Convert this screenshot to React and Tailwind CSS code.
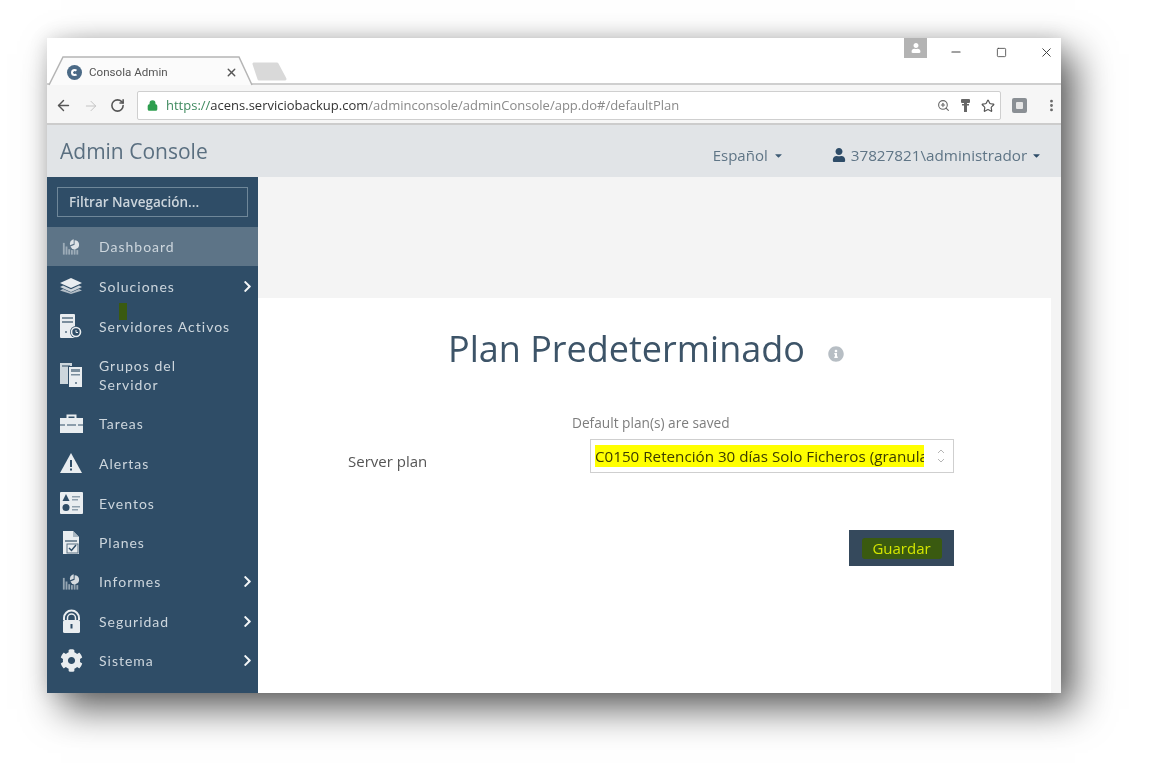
import React from "react";
import { ArrowLeft, ArrowRight, RotateCw, Lock, ZoomIn, Star, MoreVertical, Minus, Square, X } from "lucide-react";
import { FaCog, FaUser, FaInfoCircle, FaChevronRight, FaCaretDown } from "react-icons/fa";

const c = "#e9edf0";

const Chart = () => (
  <svg width="18" height="17" viewBox="0 0 20 18" className="opacity-80">
    <rect x="1" y="5" width="2" height="13" fill="#aebbc5" />
    <rect x="4" y="9" width="2" height="9" fill="#aebbc5" />
    <rect x="7" y="12" width="2" height="6" fill="#aebbc5" />
    <rect x="10" y="13" width="2" height="5" fill="#aebbc5" />
    <rect x="13" y="11" width="2" height="7" fill="#aebbc5" />
    <rect x="16" y="13" width="2" height="5" fill="#aebbc5" />
    <path d="M14 2a5 5 0 1 1-4.600 7L14 7z" fill="#fff" />
    <path d="M13 1v5L9 7.500A5 5 0 0 1 13 1z" fill="#fff" />
  </svg>
);
const Layers = () => (
  <svg width="22" height="16" viewBox="0 0 22 16" fill={c}>
    <path d="M11 0l11 5-11 5L0 5z" />
    <path d="M3 7.500l8 3.700 8-3.700 3 1.500-11 5L0 9z" opacity=".85" />
    <path d="M3 11l8 3.500 8-3.500 3 1.500-11 3.500L0 12.500z" opacity=".7" />
  </svg>
);
const ServerDoc = () => (
  <svg width="24" height="26" viewBox="0 0 24 26">
    <rect x="1" y="1" width="15" height="24" rx="1" fill={c} />
    <rect x="3" y="4" width="11" height="2" fill="#7b8e9d" />
    <rect x="3" y="8" width="11" height="2" fill="#7b8e9d" />
    <rect x="6" y="18" width="2" height="2" fill="#7b8e9d" />
    <circle cx="17" cy="19" r="6" fill="#2f4d67" />
    <circle cx="17" cy="19" r="4.500" fill="none" stroke={c} strokeWidth="1.600" />
    <path d="M17 17v2.500h2" fill="none" stroke={c} />
  </svg>
);
const Servers = () => (
  <svg width="22" height="24" viewBox="0 0 22 24">
    <rect x="0" y="0" width="12" height="21" fill="#cdd6dc" />
    <rect x="2" y="2" width="8" height="2" fill="#7b8e9d" />
    <rect x="8" y="3" width="14" height="21" fill="#2f4d67" />
    <rect x="9" y="4" width="13" height="20" fill={c} />
    <rect x="11" y="6" width="9" height="3" fill="#7b8e9d" />
    <rect x="11" y="11" width="9" height="1.500" fill="#7b8e9d" />
    <rect x="15" y="19" width="2" height="2" fill="#7b8e9d" />
  </svg>
);
const Briefcase = () => (
  <svg width="23" height="19" viewBox="0 0 23 19">
    <path d="M7.500 4V1.500h8V4" fill="none" stroke={c} strokeWidth="2" />
    <rect x="0" y="4" width="23" height="6.500" fill={c} />
    <rect x="0" y="11.500" width="23" height="7.500" fill={c} />
    <rect x="5" y="10" width="2" height="3" fill={c} />
    <rect x="16" y="10" width="2" height="3" fill={c} />
  </svg>
);
const Triangle = () => (
  <svg width="22" height="20" viewBox="0 0 22 20">
    <path d="M11 0l11 20H0z" fill={c} />
    <rect x="10" y="7" width="2" height="7" fill="#2f4d67" />
    <rect x="10" y="15.500" width="2" height="2" fill="#2f4d67" />
  </svg>
);
const Events = () => (
  <svg width="23" height="22" viewBox="0 0 23 22">
    <rect width="23" height="22" rx="1" fill={c} />
    <path d="M6 2l3.500 7h-7z" fill="#2f4d67" />
    <circle cx="6" cy="15.500" r="3.500" fill="#2f4d67" />
    <rect x="12" y="4" width="8" height="1.500" fill="#8fa0ad" />
    <rect x="12" y="7" width="6" height="1.500" fill="#8fa0ad" />
    <rect x="12" y="14" width="8" height="1.500" fill="#8fa0ad" />
    <rect x="12" y="17" width="6" height="1.500" fill="#8fa0ad" />
  </svg>
);
const PlanDoc = () => (
  <svg width="18" height="23" viewBox="0 0 18 23">
    <path d="M1 0h10l6 6v17H1z" fill={c} />
    <path d="M11 0v6h6z" fill="#aab7c1" />
    <rect x="3" y="9" width="12" height="2" fill="#7b8e9d" />
    <rect x="5" y="13" width="11" height="9" fill="none" stroke="#5b7082" />
    <path d="M7 17l2.500 2.500L14 14" fill="none" stroke="#2f4d67" strokeWidth="1.500" />
  </svg>
);
const Padlock = () => (
  <svg width="19" height="24" viewBox="0 0 19 24">
    <path d="M2 11V9a7.500 7.500 0 0 1 15 0v2" fill="none" stroke={c} strokeWidth="2" />
    <path d="M5.500 11V9a4 4 0 0 1 8 0v2" fill="none" stroke={c} strokeWidth="1.500" />
    <rect x="1" y="11" width="17" height="13" rx="1.500" fill={c} />
    <rect x="8.500" y="15" width="2" height="4.500" fill="#2f4d67" />
  </svg>
);
const KeyPin = () => (
  <svg width="9" height="13" viewBox="0 0 9 13" fill="#666" className="block">
    <rect x="0" y="0" width="9" height="4" rx="1" />
    <rect x="3" y="4" width="3" height="9" />
    <rect x="1" y="5" width="7" height="1.500" />
  </svg>
);

const items = [
  { label: "Dashboard", icon: <Chart />, h: "h-[39px]", active: true },
  { label: "Soluciones", icon: <Layers />, h: "h-10", arrow: true },
  { label: "Servidores Activos", icon: <ServerDoc />, h: "h-10" },
  { label: "Grupos del Servidor", icon: <Servers />, h: "h-[57px]", wrap: true },
  { label: "Tareas", icon: <Briefcase />, h: "h-10" },
  { label: "Alertas", icon: <Triangle />, h: "h-10" },
  { label: "Eventos", icon: <Events />, h: "h-10" },
  { label: "Planes", icon: <PlanDoc />, h: "h-[39px]" },
  { label: "Informes", icon: <Chart />, h: "h-[39px]", arrow: true },
  { label: "Seguridad", icon: <Padlock />, h: "h-10", arrow: true },
  { label: "Sistema", icon: <FaCog size={23} color={c} />, h: "h-[39px]", arrow: true },
];

function NavRow({ item }) {
  return (
    <div className={`${item.h} ${item.active ? "bg-[#5d7487]" : ""} flex items-center pl-[12px] pr-[4px] text-[#cdd6dd]`}>
      <div className="w-[24px] flex justify-center shrink-0">{item.icon}</div>
      <div className={`ml-[16px] flex-1 text-[14px] leading-[19px] tracking-[1px] ${item.wrap ? "max-w-[100px]" : ""}`}>
        {item.label}
      </div>
      {item.arrow && <FaChevronRight size={13} color="#f2f5f7" />}
    </div>
  );
}

export default function App() {
  return (
    <div className="relative min-h-[782px] overflow-hidden bg-white pl-[47px] pt-[38px] font-['Open_Sans',sans-serif]">
      <div className="w-[1014px] h-[655px] bg-white shadow-[14px_16px_36px_rgba(0,0,0,0.62),0_0_18px_rgba(0,0,0,0.12)]">
        <div className="w-full h-full flex flex-col blur-[0.6px] overflow-hidden">
          {/* tab strip */}
          <div className="relative h-[47px] shrink-0 bg-white border-b-2 border-[#cfcfcf]">
            <svg width="245" height="30" viewBox="0 0 245 30" className="absolute left-0 top-[18px]">
              <path d="M2 29L16 1h176l13 28" fill="#fbfbfb" stroke="#b5b5b5" strokeWidth="1.500" />
              <path d="M207 8h23l8 15h-26z" fill="#d9d9d9" stroke="#d9d9d9" strokeWidth="3" strokeLinejoin="round" />
            </svg>
            <div className="absolute left-[20px] top-[26px] flex items-center w-[171px]">
              <span className="w-[15px] h-[15px] rounded-full bg-[#4b6a86] flex items-center justify-center">
                <span className="w-[7px] h-[7px] rounded-full border-2 border-white border-r-transparent" />
              </span>
              <span className="ml-[7px] text-[11.6px] text-[#555] font-['Roboto',sans-serif]">Consola Admin</span>
              <X size={13} strokeWidth={2.500} color="#555" className="ml-auto" />
            </div>
            <div className="absolute left-[857px] top-0 w-[23px] h-[20px] bg-[#b3b3b3] flex items-center justify-center">
              <FaUser size={10} color="#fff" />
            </div>
            <Minus size={14} strokeWidth={1.800} color="#444" className="absolute left-[902px] top-[7px]" />
            <Square size={11} strokeWidth={1.800} color="#444" className="absolute left-[949px] top-[9px]" />
            <X size={15} strokeWidth={1.600} color="#444" className="absolute left-[992px] top-[7px]" />
          </div>
          {/* toolbar */}
          <div className="h-[40px] shrink-0 bg-[#f6f6f6] border-b-2 border-[#cccccc] flex items-center pt-[3px] pl-[8px]">
            <ArrowLeft size={17} strokeWidth={2} color="#555" />
            <ArrowRight size={16} strokeWidth={1.500} color="#c4c4c4" className="ml-[11px]" />
            <RotateCw size={15} strokeWidth={2.500} color="#555" className="ml-[11px]" />
            <div className="ml-[12px] w-[864px] h-[29px] bg-white border border-[#cfcfcf] rounded-[2px] flex items-center pl-[9px] pr-[5px]">
              <Lock size={11} strokeWidth={3} color="#2e9e4f" fill="#2e9e4f" />
              <span className="ml-[8px] text-[13px] whitespace-nowrap font-['Open_Sans',sans-serif]">
                <span className="text-[#3f8a5f]">https://</span>
                <span className="text-[#333]">acens.serviciobackup.com</span>
                <span className="text-[#8a8a8a]">/adminconsole/adminConsole/app.do#/defaultPlan</span>
              </span>
              <ZoomIn size={13} color="#666" className="ml-auto" />
              <span className="ml-[11px]"><KeyPin /></span>
              <Star size={14} strokeWidth={2} color="#555" className="ml-[11px]" />
            </div>
            <div className="ml-[11px] w-[15px] h-[15px] rounded-[2px] bg-[#8a8f94] flex items-center justify-center">
              <span className="w-[7px] h-[7px] bg-[#e6e6e6] rounded-[1px]" />
            </div>
            <MoreVertical size={15} strokeWidth={2.500} color="#666" className="ml-[17px]" />
          </div>
          {/* header */}
          <div className="h-[52px] shrink-0 bg-[#e1e4e7] flex items-center pl-[13px] text-[#5f7586]">
            <span className="text-[21px] text-[#5a6f80] mt-[1px]">Admin Console</span>
            <span className="ml-[505px] mt-[8px] text-[15px] flex items-center">
              Español <FaCaretDown size={11} className="ml-[5px]" color="#3f5c76" />
            </span>
            <span className="ml-[48px] mt-[8px] flex items-center text-[15.25px]">
              <FaUser size={14} color="#2e4c68" />
              <span className="ml-[5px]">37827821\administrador</span>
              <FaCaretDown size={11} className="ml-[4px]" color="#2e4c68" />
            </span>
          </div>
          {/* body */}
          <div className="flex-1 flex min-h-0 bg-[#f4f4f4]">
            <aside className="w-[211px] shrink-0 bg-[#2f4d67] font-['Lato',sans-serif]">
              <div className="p-[10px]">
                <div className="h-[30px] border border-[#6f8799] flex items-center pl-[11px] text-[13.5px] font-semibold text-[#ccd5dc] font-['Open_Sans',sans-serif]">
                  Filtrar Navegación...
                </div>
              </div>
              {items.map((it) => (
                <NavRow key={it.label} item={it} />
              ))}
            </aside>
            <main className="flex-1 flex flex-col pr-[10px]">
              <div className="h-[121px] shrink-0 bg-[#f4f4f4]" />
              <div className="flex-1 bg-white pt-[25px]">
                <div className="flex items-center pl-[190px]">
                  <h1 className="text-[36px] leading-[52px] text-[#3d5468]">Plan Predeterminado</h1>
                  <FaInfoCircle size={16} color="#b7bec4" className="ml-[23px] mt-[9px]" />
                </div>
                <div className="mt-[39px] pl-[314px] text-[13.7px] leading-[18px] text-[#7d7d7d]">Default plan(s) are saved</div>
                <div className="mt-[7px] flex items-center">
                  <span className="ml-[90px] w-[242px] text-[15px] text-[#555] pt-[11px]">Server plan</span>
                  <div className="w-[364px] h-[34px] border border-[#cfcfcf] flex items-center pl-[4px] pr-[8px]">
                    <span className="w-[329px] overflow-hidden whitespace-nowrap bg-[#ffff00] text-[#3c3c00] text-[15.2px] leading-[22px]">
                      C0150 Retención 30 días Solo Ficheros (granular)
                    </span>
                    <svg width="8" height="18" viewBox="0 0 8 18" className="ml-auto" fill="none" stroke="#b5b5b5">
                      <path d="M1 6l3-3 3 3M1 12l3 3 3-3" />
                    </svg>
                  </div>
                </div>
                <div className="mt-[57px] ml-[591px] w-[105px] h-[36px] bg-[#35495c] flex items-center justify-center">
                  <span className="w-[80px] h-[21px] bg-[#3a5a10] rounded-[3px] flex items-center justify-center text-[15px] text-[#d4e600]">
                    Guardar
                  </span>
                </div>
              </div>
            </main>
          </div>
        </div>
      </div>
      <div className="absolute left-[119px] top-[303px] w-[8px] h-[17px] bg-[#3a5a10]" />
    </div>
  );
}
